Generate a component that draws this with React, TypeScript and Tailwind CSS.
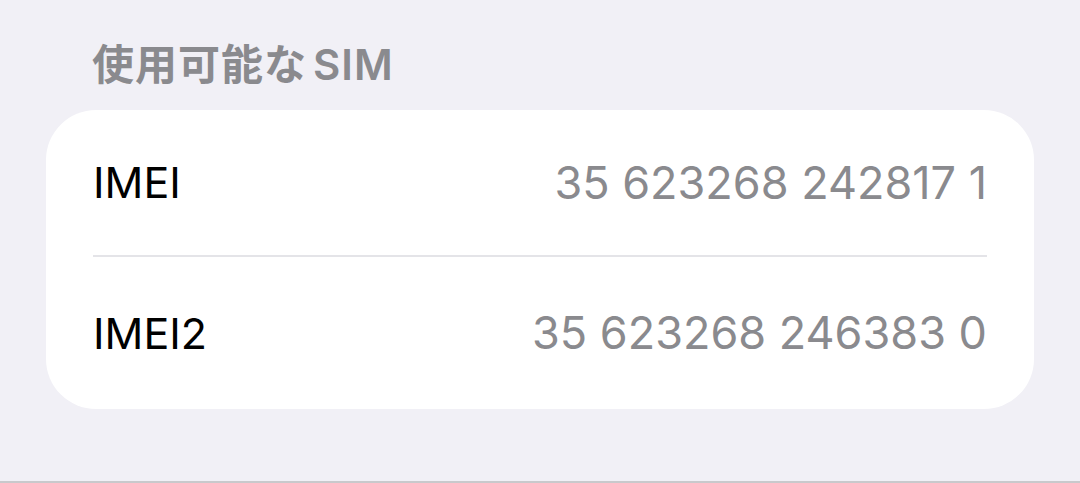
export default function App() {
  return (
    <div
      className="w-[1080px] h-[483px] bg-[#f1f0f6] flex flex-col border-b-2 border-[#c9c9cc] overflow-hidden"
      style={{ fontFamily: "Inter, 'Noto Sans CJK JP', sans-serif" }}
    >
      <div className="pl-[92px] pt-[39px] h-[110px] text-[42px] leading-[52px] font-semibold text-[#8a8a8e] tracking-[1px]">
        使用可能な<span className="ml-[6px]">SIM</span>
      </div>
      <div className="mx-[46px] bg-white rounded-[50px] px-[47px] flex flex-col">
        <div className="h-[147px] flex items-center justify-between border-b-2 border-[#e4e4e8]">
          <span className="text-[43px] text-black">IMEI</span>
          <span className="text-[45px] text-[#8a8a8e]">35 623268 242817 1</span>
        </div>
        <div className="h-[152px] flex items-center justify-between">
          <span className="text-[43px] text-black">IMEI2</span>
          <span className="text-[45px] text-[#8a8a8e]">35 623268 246383 0</span>
        </div>
      </div>
    </div>
  );
}
